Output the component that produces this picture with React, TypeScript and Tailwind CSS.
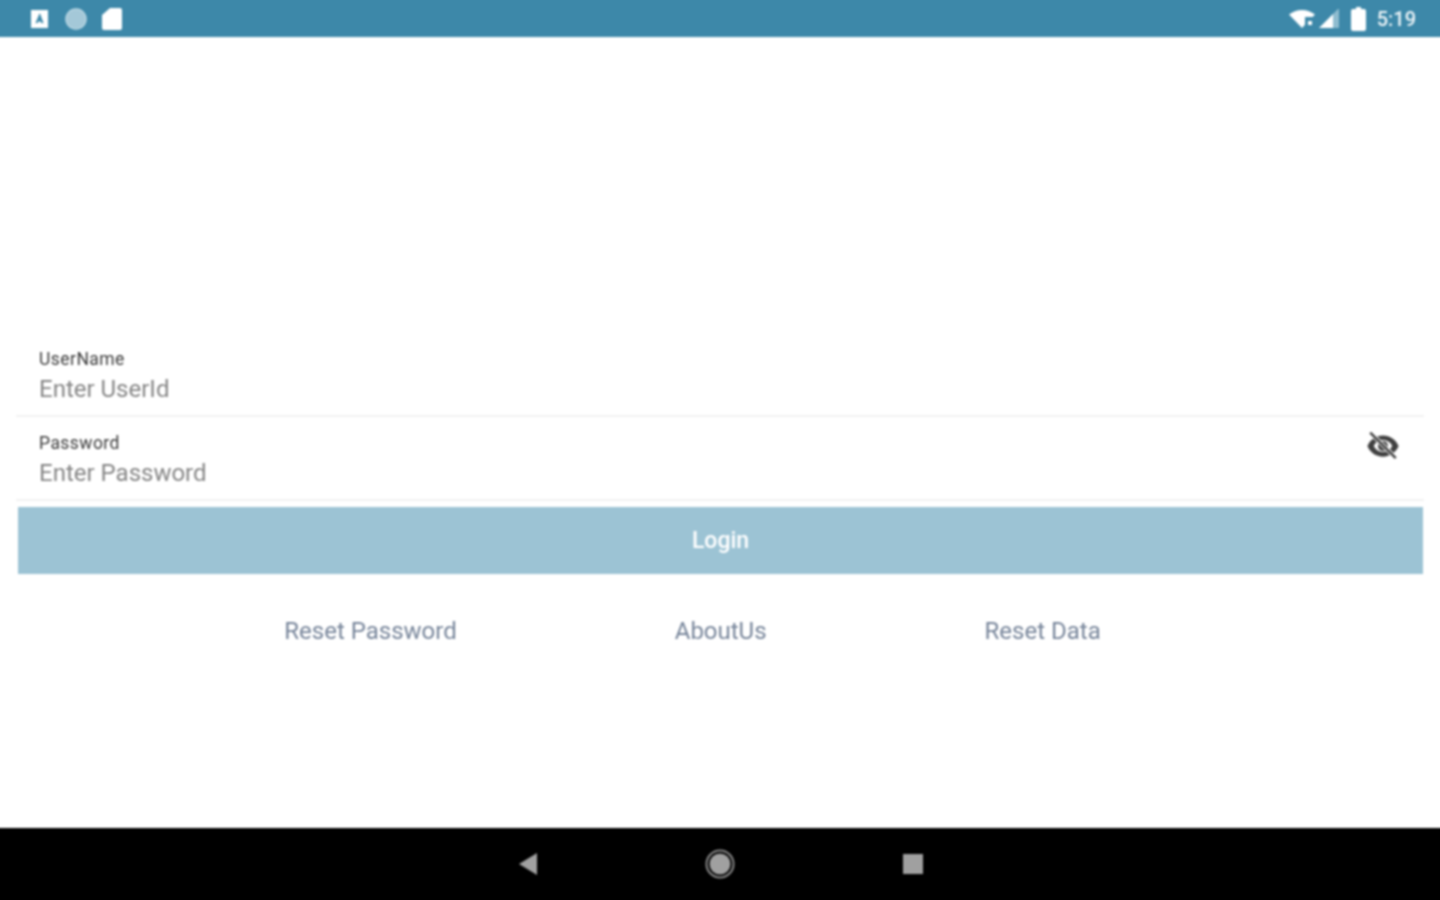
import React from 'react';

const LeftStatusIcons = () => (
  <div className="flex items-center gap-[15px]">
    <svg width="19" height="18" viewBox="0 0 19 18" className="mr-[1px]">
      <path fillRule="evenodd" fill="#fff" d="M1 0h17v18H1z M9.500 3.500 5.500 13h2.300l.6-1.600h2.200l.6 1.600h2.300L10 3.500z" />
    </svg>
    <svg width="22" height="22" viewBox="0 0 22 22">
      <circle cx="11" cy="11" r="9.500" fill="#a4c8d8" />
      <circle cx="11" cy="11" r="10" fill="none" stroke="#bcd8e4" strokeWidth="1.500" />
    </svg>
    <svg width="20" height="22" viewBox="0 0 20 22">
      <path fill="#fff" d="M8 0h10a2 2 0 0 1 2 2v18a2 2 0 0 1-2 2H2a2 2 0 0 1-2-2V7z" />
    </svg>
  </div>
);

const RightStatusIcons = () => (
  <div className="flex items-center">
    <svg width="26" height="20" viewBox="0 0 26 20" className="mr-[4px]">
      <path fill="#fff" d="M13 1C8 1 3.500 2.800 0 5.500L13 19l3-3.200V8h7.600L26 5.500C22.500 2.800 18 1 13 1z" />
      <path fill="#fff" d="M19 12h4v4h-4z" />
    </svg>
    <svg width="21" height="20" viewBox="0 0 21 20" className="mr-[11px]">
      <path fill="#fff" d="M0 19 14 5v14z" />
      <path fill="#8fbccf" d="M14 5l6-6v20h-6z" />
    </svg>
    <svg width="15" height="24" viewBox="0 0 15 24" className="mr-[11px]">
      <path fill="#fff" d="M5 0h5v2h3a2 2 0 0 1 2 2v18a2 2 0 0 1-2 2H2a2 2 0 0 1-2-2V4a2 2 0 0 1 2-2h3z" />
    </svg>
    <span className="text-[20px] font-medium leading-none text-[#eef5f8]">5:19</span>
  </div>
);

const Field = ({ label, placeholder, icon }: { label: string; placeholder: string; icon?: boolean }) => (
  <div className="relative h-[84px] border-b-2 border-[#f2f2f2] pl-[23px] pt-[16px]">
    <div className="text-[17.5px] leading-[20px] tracking-[0.45px] text-[#3a3a3a]">{label}</div>
    <div className="mt-[5px] text-[24px] leading-[30px] text-[#858585]">{placeholder}</div>
    {icon && (
      <svg width="34" height="34" viewBox="0 0 24 24" className="absolute right-[24px] top-[12px]">
        <path
          fill="#404040"
          d="M12 5.500C7 5.500 2.700 8.600 1 13c1.700 4.400 6 7.500 11 7.500S21.300 17.400 23 13c-1.700-4.400-6-7.500-11-7.500zM12 8.800c2.900 0 5.400 1.800 6.500 4.200-1.100 2.400-3.600 4.200-6.500 4.200S6.600 15.400 5.500 13c1.100-2.400 3.600-4.200 6.500-4.200z"
          transform="translate(0 -1)"
        />
        <circle cx="12" cy="12" r="3.500" fill="#404040" />
        <path stroke="#fff" strokeWidth="3" d="M3 2.500 21 20.500" />
        <path stroke="#404040" strokeWidth="1.800" d="M3 2.500 21 20.500" />
      </svg>
    )}
  </div>
);

export default function App() {
  return (
    <div className="h-[900px] w-[1440px] overflow-hidden">
      {/* oversized by 4px per side so the soft filter doesn't fade at the window edge */}
      <div className="-ml-[4px] -mt-[4px] flex h-[908px] w-[1448px] flex-col bg-white font-['Roboto',sans-serif] blur-[0.8px]">
        <div className="flex h-[41px] shrink-0 items-center justify-between bg-[#3d88a9] pl-[34px] pr-[28px] pt-[4px]">
          <LeftStatusIcons />
          <RightStatusIcons />
        </div>

        <main className="flex-1 px-[20px] pt-[296px]">
          <Field label="UserName" placeholder="Enter UserId" />
          <Field label="Password" placeholder="Enter Password" icon />
          <button className="mx-[2px] mt-[6px] flex h-[67px] w-[1405px] items-center justify-center bg-[#9cc3d4] pt-[1px] text-[23px] font-medium text-white">
            Login
          </button>
          <div className="mt-[40px] flex items-center justify-center gap-[218px] pr-[55px] text-[24px] leading-[34px] text-[#77859a]">
            <span>Reset Password</span>
            <span>AboutUs</span>
            <span>Reset Data</span>
          </div>
        </main>

        <div className="flex h-[76px] shrink-0 items-center justify-center gap-[168px] bg-black pb-[4px]">
          <svg width="20" height="24" viewBox="0 0 20 24">
            <path fill="#a0a0a0" d="M20 1v22L2 12z" />
          </svg>
          <svg width="30" height="30" viewBox="0 0 30 30">
            <circle cx="15" cy="15" r="13.500" fill="none" stroke="#8a8a8a" strokeWidth="2" />
            <circle cx="15" cy="15" r="10.500" fill="#a0a0a0" />
          </svg>
          <div className="h-[20px] w-[20px] bg-[#a0a0a0]" />
        </div>
      </div>
    </div>
  );
}
